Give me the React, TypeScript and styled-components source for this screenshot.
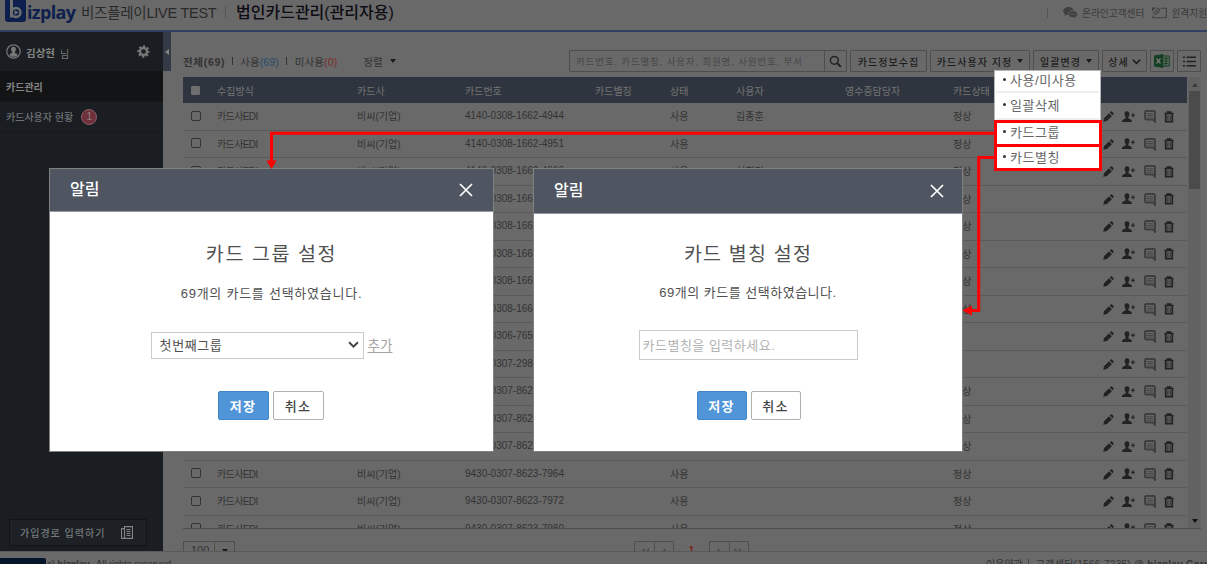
import React from 'react';
import styled, { createGlobalStyle, css } from 'styled-components';

const c = {
  page: '#696969',
  line: '#595959',
  edge: '#4e4e4e',
  text: '#333333',
  side: '#1a1e22',
  head: '#2f353e',
  red: '#ff0000',
};

const GlobalStyle = createGlobalStyle`
  * { box-sizing: border-box; }
  body {
    margin: 0;
    overflow: hidden;
    background: ${c.page};
    font-family: "Liberation Sans", "Noto Sans CJK KR", sans-serif;
    font-size: 10px;
    color: ${c.text};
  }
  svg { display: block; flex: none; }
`;

const Screen = styled.div`
  position: relative;
  width: 1207px;
  height: 564px;
  overflow: hidden;
  display: flex;
  flex-direction: column;
  background: ${c.page};
  white-space: nowrap;
`;

/* header */
const Header = styled.header`
  height: 32px;
  flex: none;
  display: flex;
  justify-content: space-between;
  padding-left: 5px;
  border-bottom: 2px solid #334064;
`;
const Brand = styled.div`
  display: flex;
  align-items: flex-start;
  height: 26px;
`;
const LogoMark = styled.div`
  width: 21px;
  height: 22px;
  background: #0d204d;
  border-radius: 0 0 3px 3px;
  display: flex;
  justify-content: center;
`;
const LogoText = styled.span`
  font: 700 18px/24px "Open Sans", sans-serif;
  color: #0d204d;
  letter-spacing: -0.65px;
  margin-left: 1px;
  width: 54px;
`;
const Company = styled.span`
  width: 135px;
  font-size: 14.5px;
  line-height: 27px;
  letter-spacing: -0.25px;
  color: #292929;
`;
const Bar = styled.i<{ $h?: number; $m?: string; $c?: string }>`
  width: 1px;
  height: ${p => p.$h ?? 10}px;
  margin: ${p => p.$m ?? '0'};
  background: ${p => p.$c ?? '#555'};
  flex: none;
`;
const PageTitle = styled.h1`
  margin: 0;
  font-size: 16px;
  font-weight: 500;
  line-height: 26px;
  color: #0e0c14;
`;
const Support = styled.div`
  display: flex;
  align-items: center;
  width: 160px;
  height: 25px;
  flex: none;
  font-size: 9.7px;
  color: #3a3a3a;
  overflow: hidden;
`;
const SupportLabel = styled.span`
  margin: 0 8px 0 4px;
`;

/* body */
const Body = styled.div`
  display: flex;
  height: 519px;
  flex: none;
`;
const Sidebar = styled.aside`
  width: 163px;
  flex: none;
  background: ${c.side};
  display: flex;
  flex-direction: column;
  color: #777a7d;
`;
const UserRow = styled.div`
  height: 39px;
  display: flex;
  align-items: center;
  padding: 0 13px 0 6px;
`;
const UserName = styled.b`
  font-size: 10.5px;
  margin: 2px 5px 0 5px;
  color: #858585;
`;
const UserSuffix = styled.span`
  flex: 1;
  margin-top: 4px;
`;
const MenuItem = styled.div<{ $active?: boolean }>`
  height: ${p => (p.$active ? 31 : 30)}px;
  display: flex;
  align-items: center;
  padding-left: 6px;
  font-weight: ${p => (p.$active ? 700 : 500)};
  background: ${p => (p.$active ? '#131416' : c.side)};
  color: ${p => (p.$active ? '#858585' : '#6f7275')};
  border-bottom: 1px solid #15181b;
`;
const Count = styled.span`
  width: 16px;
  height: 16px;
  margin-left: 8px;
  border-radius: 50%;
  border: 1px solid #8a5f66;
  background: #70303b;
  color: #8d8184;
  font-size: 10px;
  line-height: 14px;
  text-align: center;
`;
const JoinButton = styled.div`
  margin: auto 16px 5px 9px;
  height: 27px;
  border: 1px solid #111417;
  background: #1d2125;
  display: flex;
  align-items: center;
  justify-content: space-between;
  padding: 0 13px 0 10px;
  font-weight: 500;
  letter-spacing: 1px;
`;
const Collapse = styled.div`
  width: 8px;
  height: 39px;
  flex: none;
  background: #343b47;
  display: flex;
  align-items: center;
  justify-content: center;
`;
const Main = styled.main`
  width: 1018px;
  margin-left: 12px;
  padding-top: 18px;
  display: flex;
  flex-direction: column;
`;

/* tool bar */
const Toolbar = styled.div`
  display: flex;
  height: 22px;
  margin-bottom: 5px;
  gap: 3px;
`;
const Filters = styled.div`
  width: 383px;
  flex: none;
  display: flex;
  align-items: center;
  font-size: 10.5px;
`;
const Filter = styled.span<{ $bold?: boolean; $ml?: number }>`
  margin-left: ${p => p.$ml ?? 0}px;
  font-weight: ${p => (p.$bold ? 700 : 400)};
  letter-spacing: ${p => (p.$bold ? 0.7 : 0.1)}px;
`;
const Num = styled.span<{ $c: string }>`
  color: ${p => p.$c};
`;
const boxed = css`
  border: 1px solid ${c.edge};
  border-radius: 1px;
  height: 22px;
`;
const Search = styled.div`
  ${boxed}
  width: 278px;
  flex: none;
  display: flex;
`;
const SearchText = styled.span`
  width: 255px;
  padding-left: 6px;
  line-height: 21px;
  letter-spacing: 0.85px;
  font-size: 9.5px;
  color: #474747;
  border-right: 1px solid ${c.edge};
`;
const SearchIcon = styled.div`
  flex: 1;
  display: flex;
  align-items: center;
  justify-content: center;
`;
const ToolButton = styled.div<{ $w: number; $gap?: number }>`
  ${boxed}
  width: ${p => p.$w}px;
  flex: none;
  display: flex;
  align-items: center;
  justify-content: center;
  gap: ${p => p.$gap ?? 5}px;
  font-weight: 500;
  font-size: 10px;
  letter-spacing: 1.05px;
  color: #1c1c1c;
`;

/* table */
const TableArea = styled.div`
  height: 452px;
  flex: none;
  display: flex;
  overflow: hidden;
  border-bottom: 1px solid ${c.edge};
`;
const Table = styled.div`
  width: 1004px;
  flex: none;
`;
const grid = css`
  display: grid;
  grid-template-columns: 34px 140px 108px 130px 75px 66px 109px 108px 148px 1fr;
  align-items: center;
`;
const HeadRow = styled.div`
  ${grid}
  height: 26px;
  background: ${c.head};
  color: #747474;
`;
const Row = styled.div`
  ${grid}
  height: 27.5px;
  padding-bottom: 1px;
  border-bottom: 1px solid ${c.line};
`;
const Box = styled.i<{ $filled?: boolean }>`
  width: ${p => (p.$filled ? 9 : 10)}px;
  height: ${p => (p.$filled ? 9 : 10)}px;
  margin-left: 8px;
  border-radius: ${p => (p.$filled ? 1 : 2)}px;
  border: 1px solid ${p => (p.$filled ? '#6e6e6e' : '#333')};
  background: ${p => (p.$filled ? '#6e6e6e' : 'transparent')};
`;
const Tight = styled.span`
  letter-spacing: -0.6px;
`;
const CardNo = styled.span`
  letter-spacing: 0;
`;
const Actions = styled.div`
  display: flex;
  align-items: center;
  gap: 8.5px;
  padding: 2px 0 0 1.5px;
`;
const Scroll = styled.div`
  flex: 1;
  margin-left: 1px;
  display: flex;
  flex-direction: column;
  align-items: center;
  background: #626262;
  padding: 6px 1px 5px;
`;
const Thumb = styled.div`
  width: 11px;
  height: 98px;
  margin: 4px 0 auto;
  background: #4b4b4b;
`;
const Paging = styled.div`
  height: 22px;
  padding-top: 12px;
  overflow: hidden;
  display: flex;
`;
const PageSize = styled.div`
  ${boxed}
  width: 52px;
  flex: none;
  display: flex;
  font-size: 11px;
  line-height: 17px;
`;
const PageSizeText = styled.span`
  width: 31px;
  padding-left: 7px;
  border-right: 1px solid ${c.edge};
`;
const Pager = styled.div<{ $ml: number }>`
  ${boxed}
  width: 40px;
  flex: none;
  margin-left: ${p => p.$ml}px;
  display: flex;
`;
const PagerCell = styled.span`
  flex: 1;
  display: flex;
  justify-content: center;
  padding-top: 6px;
  & + & { border-left: 1px solid ${c.edge}; }
`;
const Current = styled.b`
  width: 35px;
  flex: none;
  text-align: center;
  line-height: 19px;
  color: #7b1c1c;
`;
const Caret = styled.i<{ $m?: string; $c?: string }>`
  border: 3.5px solid transparent;
  border-top: 4px solid ${p => p.$c ?? '#1c1c1c'};
  border-bottom: 0;
  height: 0;
  margin: ${p => p.$m ?? '0'};
`;

/* footer */
const Footer = styled.footer`
  height: 13px;
  border-top: 1px solid ${c.line};
  display: flex;
  align-items: flex-start;
  color: #343434;
  line-height: 14px;
  overflow: hidden;
`;
const StatusTip = styled.div`
  width: 46px;
  height: 6px;
  flex: none;
  margin-top: 6px;
  background: #04152a;
  border-radius: 0 2px 0 0;
`;
const FootText = styled.span<{ $ls?: number }>`
  margin: 6px 0 0 1px;
  letter-spacing: ${p => p.$ls ?? 0}px;
`;
const FootLinks = styled.div`
  width: 222px;
  margin-left: auto;
  display: flex;
  flex: none;
`;

/* menu over the tool bar */
const Menu = styled.div`
  position: absolute;
  left: 994px;
  top: 70px;
  width: 107px;
  height: 101px;
  background: #fff;
  border: 1px solid #b5b5b5;
`;
const MenuRow = styled.div<{ $h: number; $rule?: boolean }>`
  height: ${p => p.$h}px;
  display: flex;
  align-items: center;
  gap: 4px;
  padding-left: 8px;
  margin: 0 1px;
  border-bottom: ${p => (p.$rule ? '2px solid #eeeeee' : '0')};
  font-size: 13px;
  line-height: 18px;
  letter-spacing: 0.55px;
  color: #666;
  &::before {
    content: "";
    width: 3px;
    height: 3px;
    margin: 0 0 3px -1px;
    border-radius: 50%;
    background: #333;
  }
`;
const Marker = styled.div<{ $y: number; $h: number }>`
  position: absolute;
  left: 994px;
  top: ${p => p.$y}px;
  width: 108px;
  height: ${p => p.$h}px;
  border: 3px solid ${c.red};
`;
const Connectors = styled.svg`
  position: absolute;
  left: 0;
  top: 0;
`;

/* dialogs */
const Dialog = styled.section<{ $x: number; $w: number }>`
  position: absolute;
  left: ${p => p.$x}px;
  top: 168px;
  width: ${p => p.$w}px;
  height: 284px;
  background: #fff;
  border: 1px solid #808080;
  display: flex;
  flex-direction: column;
  align-items: center;
  color: #505050;
`;
const DialogHead = styled.div<{ $h: number; $pr: number }>`
  align-self: stretch;
  height: ${p => p.$h}px;
  background: #4f5662;
  border-bottom: 1px solid #9499a3;
  color: #fff;
  font-size: 16px;
  font-weight: 500;
  display: flex;
  align-items: center;
  justify-content: space-between;
  padding: 0 ${p => p.$pr}px 0 20px;
`;
const DialogName = styled.span`
  margin-top: -5px;
`;
const DialogTitle = styled.h2<{ $mt: number; $ls: number }>`
  margin: ${p => p.$mt}px 0 0;
  height: 30px;
  line-height: 30px;
  font-size: 19.5px;
  font-weight: 400;
  letter-spacing: ${p => p.$ls}px;
`;
const DialogNote = styled.p<{ $mt: number; $ls: number }>`
  margin: ${p => p.$mt}px 0 0;
  height: 20px;
  line-height: 20px;
  font-size: 13px;
  letter-spacing: ${p => p.$ls}px;
`;
const Field = styled.div<{ $mt: number }>`
  height: 30px;
  margin-top: ${p => p.$mt}px;
  display: flex;
  align-items: center;
`;
const Select = styled.div`
  width: 213px;
  height: 27px;
  border: 1px solid #ccc;
  display: flex;
  align-items: center;
  justify-content: space-between;
  padding: 0 4px 1px 8px;
  font-size: 13px;
  letter-spacing: 0.6px;
`;
const Add = styled.u`
  margin: -2px 0 0 4px;
  font-size: 13.5px;
  color: #a8a4a4;
  text-underline-offset: 2px;
`;
const Input = styled.div`
  width: 219px;
  height: 30px;
  border: 1px solid #ccc;
  padding-left: 3px;
  line-height: 30px;
  font-size: 13px;
  letter-spacing: 0.5px;
  color: #b3b3b3;
`;
const Buttons = styled.div<{ $mt: number; $pr?: number; $pl?: number }>`
  display: flex;
  gap: 4px;
  margin-top: ${p => p.$mt}px;
  padding: 0 ${p => p.$pr ?? 0}px 0 ${p => p.$pl ?? 0}px;
`;
const Button = styled.div<{ $primary?: boolean; $w: number }>`
  width: ${p => p.$w}px;
  height: 29px;
  border: 1px solid ${p => (p.$primary ? '#3f86c8' : '#b0b0b0')};
  border-radius: 2px;
  background: ${p => (p.$primary ? '#5095d7' : '#fff')};
  color: ${p => (p.$primary ? '#fff' : '#444')};
  font-size: 13px;
  font-weight: ${p => (p.$primary ? 700 : 500)};
  letter-spacing: 1.2px;
  line-height: 29px;
  text-align: center;
`;

const Close = () => (
  <svg width="14" height="14" viewBox="0 0 14 14" stroke="#fff" strokeWidth="1.7">
    <path d="M1 1l12 12M13 1L1 13" />
  </svg>
);
const Chevron = ({ s = 10, color = '#444' }: { s?: number; color?: string }) => (
  <svg width={s} height={s} viewBox="0 0 10 10" fill="none" stroke={color} strokeWidth="1.8">
    <path d="M1 3l4 4 4-4" />
  </svg>
);
const Pencil = () => (
  <svg width="11" height="11" viewBox="0 0 10 10" fill="#222">
    <path d="M0.3 9.8l0.6-3.200 4.600-4.500 2.600 2.600-4.600 4.500zM6.200 1.400l0.900-0.900q0.500-0.400 1 0l1.400 1.400q0.400 0.500 0 1l-0.900 0.900z" />
  </svg>
);
const UserPlus = () => (
  <svg width="13" height="12" viewBox="0 0 13 12" fill="#222">
    <path d="M5 0.3c1.700 0 2.600 1.100 2.400 2.800-.1 1.500-.6 2.400-1 2.800v1.500c1.900.8 3.600 1 3.600 3.700H0c0-2.700 1.700-2.900 3.600-3.700V5.900C3.200 5.500 2.700 4.600 2.600 3.100 2.400 1.400 3.300.3 5 .3z" />
    <path d="M9 4.200h4M11 2.200v4" stroke="#222" strokeWidth="1.100" />
  </svg>
);
const Comment = () => (
  <svg width="12" height="13" viewBox="0 0 12 13" fill="none" stroke="#3e3e3e">
    <path d="M2.200 1h7.600q1.200 0 1.200 1.200v9.600l-2-2.300H2.200Q1 9.500 1 8.300V2.200Q1 1 2.200 1z" strokeWidth="1.900" />
    <path d="M2.500 3.700h7M2.500 5.400h7M2.500 7.100h7" strokeWidth=".8" />
  </svg>
);
const Trash = () => (
  <svg width="10" height="12" viewBox="0 0 10 12" fill="none" stroke="#222">
    <path d="M.5 2.500h9M3.200 2.300V1h3.600v1.300" strokeWidth="1.300" />
    <path d="M1.700 3v7.600h6.600V3" strokeWidth="1.700" />
    <path d="M3.900 4.200v5M6.100 4.200v5" strokeWidth=".9" />
  </svg>
);
const Person = () => (
  <svg width="15" height="15" viewBox="0 0 15 15">
    <circle cx="7.500" cy="7.500" r="6.700" fill="none" stroke="#777" strokeWidth="1.200" />
    <path d="M7.500 2.800c1.700 0 2.500 1.100 2.400 2.700-.1 1.300-.6 2-1 2.400v1c1.300.5 2.600.8 2.900 2.300-2.200 2.100-6.400 2.100-8.600 0 .3-1.500 1.600-1.800 2.900-2.300v-1c-.4-.4-.9-1.100-1-2.400-.1-1.600.7-2.700 2.400-2.700z" fill="#777" />
  </svg>
);
const Gear = () => (
  <svg width="13" height="13" viewBox="0 0 13 13" fill="none" stroke="#777">
    <circle cx="6.500" cy="6.500" r="3.500" strokeWidth="2.300" />
    <circle cx="6.500" cy="6.500" r="5.200" strokeWidth="1.900" strokeDasharray="2.300 1.780" strokeDashoffset="1.150" />
  </svg>
);
const Papers = () => (
  <svg width="12" height="13" viewBox="0 0 12 13" fill="none" stroke="#858585">
    <path d="M3.500.6h8v11.800h-8zM3.500 2.600h-3v9.800h3" strokeWidth="1.100" />
    <path d="M5.500 3.500h4M5.500 5.500h4M5.500 7.500h4M5.500 9.500h4" />
  </svg>
);
const Chat = () => (
  <svg width="15" height="13" viewBox="0 0 15 13">
    <path d="M5.500 1C2.500 1 .3 2.800.3 5c0 1.200.7 2.300 1.700 3l-.6 2 2.300-1.200 1.800.2C8.500 9 10.700 7.200 10.700 5S8.500 1 5.500 1z" fill="#404040" />
    <path d="M10 4.700c2.600 0 4.500 1.500 4.500 3.500 0 1-.5 1.900-1.400 2.500l.5 1.800-2-1c-3.200.6-6-1-6-3.300 0-2 1.900-3.500 4.400-3.500z" fill="#404040" stroke="#696969" strokeWidth=".8" />
    <path d="M7.800 8.200h.9M9.600 8.200h.9M11.400 8.200h.9" stroke="#696969" strokeWidth="1" />
  </svg>
);
const Remote = () => (
  <svg width="15" height="12" viewBox="0 0 15 12" fill="none" stroke="#404040">
    <path d="M9 1.200h5.300v9.600H1V8.500" strokeWidth="1.100" />
    <path d="M0 .5h4.500L0 4.500z" fill="#404040" stroke="none" />
    <path d="M.8 6.200C3.500 5.500 5.200 3.500 5.800.8M2.500 7.800C5.500 6.800 7.500 4.300 8 1" strokeWidth="1.100" />
  </svg>
);
const Magnifier = () => (
  <svg width="13" height="13" viewBox="0 0 13 13" fill="none" stroke="#222">
    <circle cx="5.300" cy="5.300" r="3.900" strokeWidth="1.500" />
    <path d="M8.300 8.300l3.600 3.600" strokeWidth="2" />
  </svg>
);
const Excel = () => (
  <svg width="16" height="14" viewBox="0 0 16 14">
    <path d="M8 2h7.300v10H8" fill="#5f6a62" stroke="#143f22" />
    <path d="M10 4.500h4M10 7h4M10 9.500h4M12 3v8" stroke="#143f22" strokeWidth=".9" />
    <path d="M0 1.500L9.300 0v14L0 12.500z" fill="#143f22" />
    <path d="M2.500 4.500l4 5M6.500 4.500l-4 5" stroke="#777" strokeWidth="1.300" />
  </svg>
);
const List = () => (
  <svg width="13" height="11" viewBox="0 0 13 11" stroke="#222" strokeWidth="1.500">
    <path d="M0 1.300h2M0 5.500h2M0 9.700h2M3.600 1.300H13M3.600 5.500H13M3.600 9.700H13" />
  </svg>
);
const arrows: Record<string, string> = {
  first: 'M4.500 0v8L.5 4zM9 0v8L5 4z',
  prev: 'M6.500 0v8L2.500 4z',
  next: 'M2.500 0v8L6.500 4z',
  last: 'M.5 0v8L4.500 4zM5 0v8L9 4z',
};
const PageArrow = ({ kind }: { kind: string }) => (
  <svg width="9" height="8" viewBox="0 0 9 8"><path d={arrows[kind]} fill="#484848" /></svg>
);

const numbers = [
  '4140-0308-1662-4944', '4140-0308-1662-4951', '4140-0308-1662-4969', '4140-0308-1662-4977',
  '4140-0308-1662-4985', '4140-0308-1662-4993', '4140-0308-1662-5008', '4140-0308-1662-5016',
  '4140-0306-7650-1024', '9430-0307-2980-1187', '9430-0307-8623-7923', '9430-0307-8623-7931',
  '9430-0307-8623-7956', '9430-0307-8623-7964', '9430-0307-8623-7972', '9430-0307-8623-7980',
];
const owners: Record<number, string> = { 0: '김종훈', 2: '심희정' };
const inactive = [8, 9];

export default function App() {
  return (
    <>
      <GlobalStyle />
      <Screen>
        <Header>
          <Brand>
            <LogoMark>
              <svg width="15" height="21" viewBox="0 0 15 21" fill="none">
                <path d="M3.500 0v17.500" stroke="#6f6f6f" strokeWidth="3" />
                <circle cx="8" cy="12.500" r="4.500" stroke="#6f6f6f" strokeWidth="2.400" />
                <path d="M6.500 10l4 2.500-4 2.500z" fill="#6f6f6f" />
              </svg>
            </LogoMark>
            <LogoText>izplay</LogoText>
            <Company>비즈플레이LIVE TEST</Company>
            <Bar $h={12} $m="6px 10px 0 9px" />
            <PageTitle>법인카드관리(관리자용)</PageTitle>
          </Brand>
          <Support>
            <Bar $m="0 15px 0 0" />
            <Chat />
            <SupportLabel>온라인고객센터</SupportLabel>
            <Remote />
            <SupportLabel>원격지원</SupportLabel>
          </Support>
        </Header>

        <Body>
          <Sidebar>
            <UserRow>
              <Person />
              <UserName>김상현</UserName>
              <UserSuffix>님</UserSuffix>
              <Gear />
            </UserRow>
            <MenuItem $active>카드관리</MenuItem>
            <MenuItem>
              카드사용자 현황<Count>1</Count>
            </MenuItem>
            <JoinButton>
              가입경로 입력하기
              <Papers />
            </JoinButton>
          </Sidebar>
          <Collapse>
            <svg width="4" height="6" viewBox="0 0 4 6"><path d="M4 0v6L0 3z" fill="#858585" /></svg>
          </Collapse>

          <Main>
            <Toolbar>
              <Filters>
                <Filter $bold>전체(69)</Filter>
                <Bar $h={8} $m="0 7px" $c="#333" />
                <Filter>사용<Num $c="#284a6b">(69)</Num></Filter>
                <Bar $h={8} $m="0 8px 0 7px" $c="#333" />
                <Filter>미사용<Num $c="#7b2a2a">(0)</Num></Filter>
                <Filter $ml={26}>정렬</Filter>
                <Caret $m="0 0 0 7px" />
              </Filters>
              <Search>
                <SearchText>카드번호, 카드별칭, 사용자, 회원명, 사원번호, 부서</SearchText>
                <SearchIcon><Magnifier /></SearchIcon>
              </Search>
              <ToolButton $w={77}>카드정보수집</ToolButton>
              <ToolButton $w={100}>카드사용자 지정<Caret /></ToolButton>
              <ToolButton $w={66}>일괄변경<Caret /></ToolButton>
              <ToolButton $w={45} $gap={3}>상세<Chevron s={9} color="#1c1c1c" /></ToolButton>
              <ToolButton $w={24}><Excel /></ToolButton>
              <ToolButton $w={24}><List /></ToolButton>
            </Toolbar>

            <TableArea>
              <Table>
                <HeadRow>
                  <Box $filled />
                  <span>수집방식</span>
                  <span>카드사</span>
                  <span>카드번호</span>
                  <span>카드별칭</span>
                  <span>상태</span>
                  <span>사용자</span>
                  <span>영수증담당자</span>
                  <span>카드상태</span>
                </HeadRow>
                {numbers.map((n, i) => (
                  <Row key={n}>
                    <Box />
                    <Tight>카드사EDI</Tight>
                    <span>비씨(기업)</span>
                    <CardNo>{n}</CardNo>
                    <span />
                    <span>사용</span>
                    <span>{owners[i]}</span>
                    <span />
                    <span>{inactive.includes(i) ? '' : '정상'}</span>
                    <Actions>
                      <Pencil />
                      <UserPlus />
                      <Comment />
                      <Trash />
                    </Actions>
                  </Row>
                ))}
              </Table>
              <Scroll>
                <svg width="6" height="4" viewBox="0 0 6 4"><path d="M0 4h6L3 0z" fill="#3a3a3a" /></svg>
                <Thumb />
                <Caret $c="#111" />
              </Scroll>
            </TableArea>

            <Paging>
              <PageSize>
                <PageSizeText>100</PageSizeText>
                <Caret $m="7px 0 0 7px" />
              </PageSize>
              <Pager $ml={399}>
                <PagerCell><PageArrow kind="first" /></PagerCell>
                <PagerCell><PageArrow kind="prev" /></PagerCell>
              </Pager>
              <Current>1</Current>
              <Pager $ml={0}>
                <PagerCell><PageArrow kind="next" /></PagerCell>
                <PagerCell><PageArrow kind="last" /></PagerCell>
              </Pager>
            </Paging>
          </Main>
        </Body>

        <Footer>
          <StatusTip />
          <FootText $ls={-0.25}>c) <b>bizplay.</b>&nbsp; All rights reserved.</FootText>
          <FootLinks>
            <FootText>이용약관</FootText>
            <Bar $m="7px 6px 0 5px" $c="#444" />
            <FootText $ls={0.25}>고객센터(1566-7235) @ <b>bizplay Corp</b></FootText>
          </FootLinks>
        </Footer>

        <Dialog $x={49} $w={445}>
          <DialogHead $h={43} $pr={20}>
            <DialogName>알림</DialogName>
            <Close />
          </DialogHead>
          <DialogTitle $mt={27} $ls={1.6}>카드 그룹 설정</DialogTitle>
          <DialogNote $mt={15} $ls={0.75}>69개의 카드를 선택하였습니다.</DialogNote>
          <Field $mt={26}>
            <Select>
              첫번째그룹
              <Chevron s={11} />
            </Select>
            <Add>추가</Add>
          </Field>
          <Buttons $mt={31} $pr={2}>
            <Button $primary $w={51}>저장</Button>
            <Button $w={51}>취소</Button>
          </Buttons>
        </Dialog>

        <Dialog $x={533} $w={430}>
          <DialogHead $h={45} $pr={18}>
            <DialogName>알림</DialogName>
            <Close />
          </DialogHead>
          <DialogTitle $mt={25} $ls={1.2}>카드 별칭 설정</DialogTitle>
          <DialogNote $mt={14} $ls={0.5}>69개의 카드를 선택하였습니다.</DialogNote>
          <Field $mt={27}>
            <Input>카드별칭을 입력하세요.</Input>
          </Field>
          <Buttons $mt={31} $pl={1}>
            <Button $primary $w={50}>저장</Button>
            <Button $w={50}>취소</Button>
          </Buttons>
        </Dialog>

        <Menu>
          <MenuRow $h={22} $rule>사용/미사용</MenuRow>
          <MenuRow $h={27} $rule>일괄삭제</MenuRow>
          <MenuRow $h={25}>카드그룹</MenuRow>
          <MenuRow $h={26}>카드별칭</MenuRow>
        </Menu>
        <Marker $y={120} $h={27} />
        <Marker $y={144} $h={27} />
        <Connectors width="1207" height="564" viewBox="0 0 1207 564" fill="none">
          <path d="M995 133.300H271.500V162M995 157.500H978.700V310.500H970" stroke={c.red} strokeWidth="3" />
          <path d="M266.500 160.500h10l-5 8.500zM972 305.500v10l-9.500-5z" fill={c.red} />
        </Connectors>
      </Screen>
    </>
  );
}
